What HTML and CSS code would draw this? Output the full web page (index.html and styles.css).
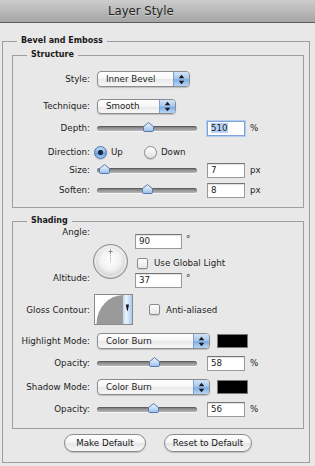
FILE: index.html
```html
<!DOCTYPE html>
<html>
<head>
<meta charset="utf-8">
<title>Layer Style</title>
<link rel="stylesheet" href="styles.css">
</head>
<body>
<svg class="defs" width="0" height="0" aria-hidden="true">
  <defs>
    <linearGradient id="thumbGrad" x1="0" y1="0" x2="0" y2="1">
      <stop offset="0" stop-color="#f2f7fd"/>
      <stop offset="0.5" stop-color="#c9ddf5"/>
      <stop offset="1" stop-color="#98bde9"/>
    </linearGradient>
    <radialGradient id="dialGrad" cx="0.5" cy="0.45" r="0.55">
      <stop offset="0" stop-color="#ffffff"/>
      <stop offset="0.55" stop-color="#f1f1f1"/>
      <stop offset="0.85" stop-color="#d6d6d6"/>
      <stop offset="1" stop-color="#bdbdbd"/>
    </radialGradient>
    <linearGradient id="stripGrad" x1="0" y1="0" x2="1" y2="0">
      <stop offset="0" stop-color="#bcd5f3"/>
      <stop offset="0.35" stop-color="#eef5fd"/>
      <stop offset="1" stop-color="#a9c9ee"/>
    </linearGradient>
  </defs>
</svg>

<div class="titlebar"><span class="title">Layer Style</span></div>

<div class="main">
  <fieldset class="group outer">
    <legend class="legend">Bevel and Emboss</legend>

    <fieldset class="group inner structure">
      <legend class="legend">Structure</legend>

      <div class="row m10">
        <span class="lbl">Style:</span>
        <div class="popup w-style">
          <span class="popup-text">Inner Bevel</span>
          <span class="stepper"><svg width="7" height="11" viewBox="0 0 7 11"><path d="M3.5 0.8 L6.3 4.2 H0.7 Z M3.5 10.2 L6.3 6.8 H0.7 Z" fill="#1b1b1b"/></svg></span>
        </div>
      </div>

      <div class="row m9">
        <span class="lbl">Technique:</span>
        <div class="popup small w-tech">
          <span class="popup-text">Smooth</span>
          <span class="stepper"><svg width="7" height="11" viewBox="0 0 7 11"><path d="M3.5 0.8 L6.3 4.2 H0.7 Z M3.5 10.2 L6.3 6.8 H0.7 Z" fill="#1b1b1b"/></svg></span>
        </div>
      </div>

      <div class="row m4">
        <span class="lbl">Depth:</span>
        <div class="slider">
          <div class="track"></div>
          <svg class="thumb" style="left:46px" width="11" height="10" viewBox="0 0 11 10"><path d="M0.5 4.6 L5.5 0.6 L10.5 4.6 V8.4 Q10.5 9.5 9.4 9.5 H1.6 Q0.5 9.5 0.5 8.4 Z" fill="url(#thumbGrad)" stroke="#5679ab"/></svg>
        </div>
        <span class="field focus"><span class="sel">510</span></span>
        <span class="unit">%</span>
      </div>

      <div class="row m6">
        <span class="lbl">Direction:</span>
        <span class="radio on first"></span><span class="rtext">Up</span>
        <span class="radio"></span><span class="rtext">Down</span>
      </div>

      <div class="row m0">
        <span class="lbl">Size:</span>
        <div class="slider">
          <div class="track"></div>
          <svg class="thumb" style="left:2px" width="11" height="10" viewBox="0 0 11 10"><path d="M0.5 4.6 L5.5 0.6 L10.5 4.6 V8.4 Q10.5 9.5 9.4 9.5 H1.6 Q0.5 9.5 0.5 8.4 Z" fill="url(#thumbGrad)" stroke="#5679ab"/></svg>
        </div>
        <span class="field">7</span>
        <span class="unit">px</span>
      </div>

      <div class="row m2">
        <span class="lbl">Soften:</span>
        <div class="slider">
          <div class="track"></div>
          <svg class="thumb" style="left:45px" width="11" height="10" viewBox="0 0 11 10"><path d="M0.5 4.6 L5.5 0.6 L10.5 4.6 V8.4 Q10.5 9.5 9.4 9.5 H1.6 Q0.5 9.5 0.5 8.4 Z" fill="url(#thumbGrad)" stroke="#5679ab"/></svg>
        </div>
        <span class="field">8</span>
        <span class="unit">px</span>
      </div>
    </fieldset>

    <fieldset class="group inner shading">
      <legend class="legend">Shading</legend>

      <div class="angle-block">
        <div class="angle-labels">
          <span class="lbl-line">Angle:</span>
          <span class="lbl-line">Altitude:</span>
        </div>
        <svg class="dial" width="35" height="35" viewBox="0 0 35 35">
          <circle cx="17.5" cy="17.5" r="17" fill="url(#dialGrad)" stroke="#8e8e8e"/>
          <circle cx="17.5" cy="17.5" r="15.2" fill="none" stroke="#ffffff" stroke-opacity="0.7"/>
          <line x1="17.5" y1="17.8" x2="17.5" y2="7.5" stroke="#a0a0a0" stroke-width="1" stroke-dasharray="1 1"/>
          <path d="M15.5 7.5 H19.5 M17.5 5.5 V9.5" stroke="#8a8a8a" stroke-width="1"/>
        </svg>
        <div class="angle-right">
          <div class="field-line t1"><span class="field wide">90</span><span class="deg">°</span></div>
          <div class="check-line t2"><span class="checkbox"></span><span class="ctext">Use Global Light</span></div>
          <div class="field-line t3"><span class="field wide">37</span><span class="deg">°</span></div>
        </div>
      </div>

      <div class="row gloss m6">
        <span class="lbl">Gloss Contour:</span>
        <svg class="contour" width="39" height="31" viewBox="0 0 39 31">
          <rect x="0.5" y="0.5" width="38" height="30" fill="#ffffff" stroke="#8a8a8a"/>
          <path d="M2.5 30 A27 29 0 0 1 29 1 V30 Z" fill="#9a9a9a"/>
          <rect x="29" y="1" width="9" height="29" fill="url(#stripGrad)"/>
          <path d="M31.8 10.5 H35 L34 15.5 L33.4 17.5 L32.8 15.5 Z" fill="#111"/>
        </svg>
        <span class="checkbox aa"></span><span class="ctext">Anti-aliased</span>
      </div>

      <div class="row r16 m8">
        <span class="lbl">Highlight Mode:</span>
        <div class="popup w-mode">
          <span class="popup-text">Color Burn</span>
          <span class="stepper"><svg width="7" height="11" viewBox="0 0 7 11"><path d="M3.5 0.8 L6.3 4.2 H0.7 Z M3.5 10.2 L6.3 6.8 H0.7 Z" fill="#1b1b1b"/></svg></span>
        </div>
        <span class="swatch"></span>
      </div>

      <div class="row r16 m6">
        <span class="lbl">Opacity:</span>
        <div class="slider">
          <div class="track"></div>
          <svg class="thumb" style="left:52px" width="11" height="10" viewBox="0 0 11 10"><path d="M0.5 4.6 L5.5 0.6 L10.5 4.6 V8.4 Q10.5 9.5 9.4 9.5 H1.6 Q0.5 9.5 0.5 8.4 Z" fill="url(#thumbGrad)" stroke="#5679ab"/></svg>
        </div>
        <span class="field">58</span>
        <span class="unit">%</span>
      </div>

      <div class="row r16 m8">
        <span class="lbl">Shadow Mode:</span>
        <div class="popup w-mode">
          <span class="popup-text">Color Burn</span>
          <span class="stepper"><svg width="7" height="11" viewBox="0 0 7 11"><path d="M3.5 0.8 L6.3 4.2 H0.7 Z M3.5 10.2 L6.3 6.8 H0.7 Z" fill="#1b1b1b"/></svg></span>
        </div>
        <span class="swatch"></span>
      </div>

      <div class="row r16 m6">
        <span class="lbl">Opacity:</span>
        <div class="slider">
          <div class="track"></div>
          <svg class="thumb" style="left:51px" width="11" height="10" viewBox="0 0 11 10"><path d="M0.5 4.6 L5.5 0.6 L10.5 4.6 V8.4 Q10.5 9.5 9.4 9.5 H1.6 Q0.5 9.5 0.5 8.4 Z" fill="url(#thumbGrad)" stroke="#5679ab"/></svg>
        </div>
        <span class="field">56</span>
        <span class="unit">%</span>
      </div>
    </fieldset>

    <div class="buttons">
      <button class="btn b1" type="button">Make Default</button>
      <button class="btn b2" type="button">Reset to Default</button>
    </div>
  </fieldset>
</div>
</body>
</html>
```

FILE: styles.css
```css
* { box-sizing: border-box; }

html, body { margin: 0; padding: 0; }

body {
  width: 315px;
  height: 466px;
  overflow: hidden;
  background: #e8e8e8;
  font-family: "DejaVu Sans", "Noto Sans", sans-serif;
  font-size: 8.7px;
  color: #1c1c1c;
}

.defs { display: block; width: 0; height: 0; overflow: hidden; }

/* title bar */
.titlebar {
  height: 23px;
  border-bottom: 1px solid #5c5c5c;
  background: linear-gradient(#cdcdcd, #b9b9b9 50%, #a5a5a5);
  padding-left: 108px;
}
.title {
  font-size: 11.7px;
  line-height: 22px;
  color: #1f1f1f;
  text-shadow: 0 1px 0 rgba(255,255,255,0.35);
}

.main { padding-top: 13px; }

/* group boxes */
.group {
  border: 1px solid #9e9e9e;
  margin: 0;
  padding: 0;
  min-width: 0;
}
.outer { margin: 0 5px 0 2px; padding: 0 5px 10px 9px; }
.legend {
  font-weight: bold;
  font-size: 8px;
  line-height: 10px;
  padding: 0 4px;
  margin-left: 5px;
  color: #1a1a1a;
}
.inner .legend { margin-left: 14px; }
.structure { margin-top: 4px; padding: 0 0 8px; }
.shading { margin-top: 8px; padding: 0 0 11px; }

/* rows */
.row { display: flex; align-items: center; height: 18px; }
.r16 { height: 16px; }
.m0 { margin-top: 0; }
.m2 { margin-top: 2px; }
.m4 { margin-top: 4px; }
.m6 { margin-top: 6px; }
.m8 { margin-top: 8px; }
.m9 { margin-top: 9px; }
.m10 { margin-top: 10px; }

.lbl {
  flex: none;
  width: 77px;
  margin-right: 7px;
  text-align: right;
  white-space: nowrap;
}

/* popup buttons */
.popup {
  display: flex;
  align-items: stretch;
  height: 16px;
  border: 1px solid #8b8b8b;
  border-radius: 4px;
  background: linear-gradient(#ffffff, #f6f6f6 50%, #e9e9e9 52%, #f7f7f7);
  box-shadow: 0 1px 1px rgba(0,0,0,0.18);
  overflow: hidden;
}
.popup.small { height: 15px; }
.w-style { width: 93px; }
.w-tech { width: 79px; }
.w-mode { width: 113px; }
.popup-text {
  flex: 1;
  padding-left: 8px;
  line-height: 14px;
  white-space: nowrap;
}
.popup.small .popup-text { line-height: 13px; }
.stepper {
  flex: none;
  width: 16px;
  display: flex;
  align-items: center;
  justify-content: center;
  border-left: 1px solid #7f9fc9;
  background: linear-gradient(#d3e4f8, #a9c9ef 45%, #7eaee8 55%, #b9d5f5);
}

/* sliders */
.slider {
  position: relative;
  flex: none;
  width: 100px;
  height: 12px;
  display: flex;
  align-items: center;
}
.track {
  width: 100%;
  height: 5px;
  border-radius: 3px;
  background: linear-gradient(#747474, #9c9c9c 60%, #b8b8b8);
  box-shadow: inset 0 1px 1px rgba(0,0,0,0.25), 0 1px 0 rgba(255,255,255,0.6);
}
.thumb { position: absolute; top: 0; }

/* text fields */
.field {
  flex: none;
  display: block;
  width: 38px;
  height: 15px;
  margin-left: 10px;
  padding-left: 3px;
  line-height: 13px;
  background: #ffffff;
  border: 1px solid #9a9a9a;
  border-top-color: #747474;
  box-shadow: inset 0 1px 1px rgba(0,0,0,0.12);
}
.field.focus {
  border-color: #7ea3d4;
  box-shadow: 0 0 0 1px #b3cdee;
}
.sel { background: #b6d2f5; }
.unit { margin-left: 5px; }

/* radios */
.radio {
  flex: none;
  width: 13px;
  height: 13px;
  border-radius: 50%;
  border: 1px solid #8c8c8c;
  background: linear-gradient(#fefefe, #e2e2e2);
  box-shadow: 0 1px 1px rgba(0,0,0,0.15);
}
.radio.on {
  border-color: #4b73ab;
  background:
    radial-gradient(circle, #1c2a42 0, #1c2a42 2.2px, rgba(28,42,66,0) 2.9px),
    linear-gradient(#c3dbf6, #7eaee6 50%, #5f98df 52%, #a7c9f1);
}
.radio.first { margin-left: -3px; }
.rtext { margin-left: 4px; margin-right: 21px; }

/* angle block */
.angle-block { display: flex; height: 62px; }
.angle-labels {
  flex: none;
  width: 77px;
  margin-right: 3px;
  display: flex;
  flex-direction: column;
  justify-content: space-between;
  align-items: flex-end;
  padding-bottom: 4px;
}
.lbl-line { line-height: 12px; }
.dial { flex: none; margin-top: 18px; }
.angle-right { margin-left: 7px; display: flex; flex-direction: column; }
.field-line { display: flex; align-items: flex-start; height: 15px; }
.field-line .field { margin-left: 0; }
.field.wide { width: 47px; }
.deg { margin-left: 4px; line-height: 10px; }
.t1 { margin-top: 8px; }
.t2 { margin-top: 8px; }
.t3 { margin-top: 4px; }
.check-line { display: flex; align-items: center; height: 12px; }

.checkbox {
  flex: none;
  display: block;
  width: 11px;
  height: 11px;
  margin-left: 2px;
  border: 1px solid #8c8c8c;
  border-radius: 2px;
  background: linear-gradient(#ffffff, #e6e6e6);
  box-shadow: 0 1px 1px rgba(0,0,0,0.12);
}
.ctext { margin-left: 6px; white-space: nowrap; }

/* gloss contour */
.gloss { height: 31px; }
.contour { flex: none; margin-left: -3px; }
.checkbox.aa { margin-left: 16px; }

.swatch {
  flex: none;
  width: 31px;
  height: 14px;
  margin-left: 7px;
  background: #000000;
  border: 1px solid #7a7a7a;
}

/* buttons */
.buttons {
  display: flex;
  justify-content: center;
  gap: 18px;
  margin-top: 5px;
  height: 18px;
}
.btn {
  font-family: "DejaVu Sans", "Noto Sans", sans-serif;
  font-size: 8.7px;
  color: #151515;
  height: 18px;
  padding: 0;
  border: 1px solid #8a8a8a;
  border-radius: 9px;
  background: linear-gradient(#ffffff, #f4f4f4 50%, #e6e6e6 52%, #f9f9f9);
  box-shadow: 0 1px 1px rgba(0,0,0,0.18);
}
.b1 { width: 82px; }
.b2 { width: 88px; }
```
